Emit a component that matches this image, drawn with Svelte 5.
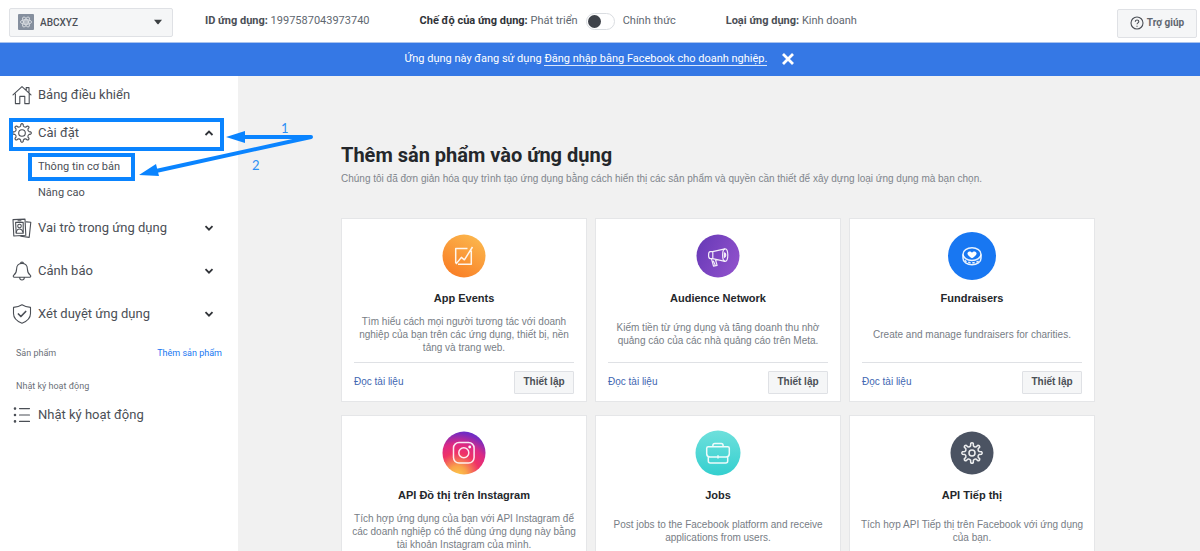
<script>
  const groups = [
    { label: 'Vai trò trong ứng dụng', icon: 'roles' },
    { label: 'Cảnh báo', icon: 'bell' },
    { label: 'Xét duyệt ứng dụng', icon: 'shield' }
  ];

  const products = [
    { icon: 'events', name: 'App Events', text: 'Tìm hiểu cách mọi người tương tác với doanh nghiệp của bạn trên các ứng dụng, thiết bị, nền tảng và trang web.' },
    { icon: 'audience', name: 'Audience Network', text: 'Kiếm tiền từ ứng dụng và tăng doanh thu nhờ quảng cáo của các nhà quảng cáo trên Meta.' },
    { icon: 'fund', name: 'Fundraisers', text: 'Create and manage fundraisers for charities.' },
    { icon: 'instagram', name: 'API Đồ thị trên Instagram', text: 'Tích hợp ứng dụng của bạn với API Instagram để các doanh nghiệp có thể dùng ứng dụng này bằng tài khoản Instagram của mình.' },
    { icon: 'jobs', name: 'Jobs', text: 'Post jobs to the Facebook platform and receive applications from users.' },
    { icon: 'marketing', name: 'API Tiếp thị', text: 'Tích hợp API Tiếp thị trên Facebook với ứng dụng của bạn.' }
  ];

  // Outline of a cog with rounded teeth, centred on (cx, cy).
  function cog(cx, cy, outer, inner, teeth = 8) {
    const step = (Math.PI * 2) / teeth;
    const at = (r, a) => `${(cx + r * Math.cos(a)).toFixed(2)} ${(cy + r * Math.sin(a)).toFixed(2)}`;
    let d = '';
    for (let i = 0; i < teeth; i++) {
      const a = i * step - Math.PI / 2;
      d += `${i ? 'L' : 'M'}${at(inner, a - step * 0.24)}L${at(outer - 0.6, a - step * 0.17)}`;
      d += `Q${at(outer + 0.6, a)} ${at(outer - 0.6, a + step * 0.17)}L${at(inner, a + step * 0.24)}`;
      d += `Q${at(inner - 1.2, a + step * 0.5)} ${at(inner, a + step * 0.76)}`;
    }
    return d + 'Z';
  }

  let live = $state(false);
  let banner = $state(true);
</script>

{#snippet chevron(up)}
  <svg class="chevron" viewBox="0 0 10 8" aria-hidden="true">
    <path d={up ? 'M1.5 6 5 2.5 8.5 6' : 'M1.5 2.2 5 5.7 8.5 2.2'} />
  </svg>
{/snippet}

{#snippet navIcon(name)}
  <svg class="nav-icon" viewBox="0 0 20 20" aria-hidden="true">
    {#if name === 'home'}
      <path d="M1 9.8 10 1.6l9 8.2M3.4 9v9.6h4.4v-7.2h5v7.2h4.4V8.2M14.2 5.2V2.6h2.8v5.2" />
    {:else if name === 'gear'}
      <path d={cog(10, 10, 9.4, 7.2)} />
      <circle cx="10" cy="10" r="3.3" />
    {:else if name === 'roles'}
      <path d="M1 1.6 13 1.1l.8 16.2-12 .7ZM14.4 3.9l4.4.4-1.6 15.1-8.4-1.1" />
      <path d="M3.6 4.4h7.600v10.800H4.200ZM6 2.800h3" />
      <circle cx="7.500" cy="8" r="1.800" />
      <path d="M4.200 14.400c.4-2.200 1.400-3.400 3.300-3.400s3 1.200 3.400 3.200" />
    {:else if name === 'bell'}
      <path d="M10 2.400c3.400 0 5.400 2.300 5.400 5.500 0 3.500 1 4.900 3 6.500.7.7.3 1.800-.7 1.800H2.300c-1 0-1.400-1.100-.7-1.800 2-1.600 3-3 3-6.500 0-3.200 2-5.500 5.400-5.500ZM8.500 2.500c0-2 3-2 3 0M7.600 16.200c.2 3.700 4.600 3.700 4.800 0" />
    {:else if name === 'shield'}
      <path d="M10 .8c2.500 1.700 5.400 2.400 8.500 2.600v6.100c0 4.800-3.500 7.800-8.500 9.800-5-2-8.500-5-8.500-9.800V3.400C4.600 3.200 7.500 2.500 10 .8Z" />
      <path class="strong" d="m6.400 10 2.500 2.500 4.800-5" />
    {:else}
      <path d="M7.500 3.600h10M7.500 10h10M7.500 16.400h10" />
      <path class="dots" d="M3 3.600h.01M3 10h.01M3 16.400h.01" />
    {/if}
  </svg>
{/snippet}

{#snippet productIcon(name)}
  <svg class="product-icon" viewBox="0 0 48 48" aria-hidden="true">
    {#if name === 'events'}
      <defs>
        <linearGradient id="g-events" x1="0.2" y1="1" x2="0.8" y2="0">
          <stop offset="0" stop-color="#f97c24" /><stop offset="1" stop-color="#fbb84e" />
        </linearGradient>
      </defs>
      <circle cx="24" cy="24" r="21.5" fill="url(#g-events)" />
      <path class="line" d="M27.5 16.500H15.700v14.700M18 32.300h13.300V18.500M16 32l5.400-6.600 3 2.400L32.500 15" />
    {:else if name === 'audience'}
      <defs>
        <linearGradient id="g-audience" x1="0" y1="0.3" x2="1" y2="0.8">
          <stop offset="0" stop-color="#6a3bb8" /><stop offset="1" stop-color="#9152cc" />
        </linearGradient>
      </defs>
      <circle cx="24" cy="24" r="21.5" fill="url(#g-audience)" />
      <path class="line thin" d="M18.600 19.700 31 16.900M18.600 26.600 31 29.400M18.800 19.700h-2.600c-2.200 0-2.200 6.900 0 6.900h2.600ZM17.500 26.800l2 7.400 3.600-.8-1.700-6M19.200 28.700l2 4.200" />
      <ellipse class="line thin" cx="31.2" cy="23.1" rx="2.6" ry="6.3" />
      <path class="line thin" d="M30.400 20.800c1.800.6 1.800 4 0 4.600Z" />
    {:else if name === 'fund'}
      <circle cx="24" cy="24" r="24" fill="#1877f2" />
      <ellipse class="line" cx="24" cy="22.2" rx="9" ry="6.4" />
      <path class="line" d="M15 22.600v3.600c0 3.800 4 6.600 9 6.600s9-2.800 9-6.600v-3.600" />
      <path class="line" stroke-dasharray="2.4 1.7" d="M16.600 28.400c3.700 3.200 11.100 3.200 14.800 0" />
      <path fill="#fff" d="M24 26.200c-3-1.800-4.900-3.300-4.500-5.200.5-2 3.400-2.200 4.500-.3 1.100-1.900 4-1.700 4.500.3.4 1.900-1.500 3.400-4.500 5.200Z" />
    {:else if name === 'instagram'}
      <defs>
        <radialGradient id="g-insta" cx="0.35" cy="1.02" r="1.08">
          <stop offset="0" stop-color="#fcc94a" /><stop offset="0.2" stop-color="#f9a24a" />
          <stop offset="0.48" stop-color="#ef3267" /><stop offset="0.68" stop-color="#dd2a84" />
          <stop offset="0.9" stop-color="#7b2bbd" /><stop offset="1" stop-color="#5b2fd0" />
        </radialGradient>
      </defs>
      <circle cx="24" cy="24" r="21.5" fill="url(#g-insta)" />
      <rect class="line" x="13.5" y="13.5" width="20.600" height="20.600" rx="5.5" />
      <circle class="line" cx="23.8" cy="23.8" r="5" />
      <circle cx="29.7" cy="18" r="1.4" fill="#fff" />
    {:else if name === 'jobs'}
      <defs>
        <linearGradient id="g-jobs" x1="0" y1="0" x2="0" y2="1">
          <stop offset="0" stop-color="#6ee0dc" /><stop offset="1" stop-color="#34cfcf" />
        </linearGradient>
      </defs>
      <circle cx="24" cy="24" r="22.5" fill="url(#g-jobs)" />
      <path class="line" d="M14.200 17.800h19.600c1 0 1.500.5 1.500 1.500v5.500c0 2-1.200 3.200-3.200 3.200H15.900c-2 0-3.200-1.200-3.200-3.200v-5.500c0-1 .5-1.500 1.500-1.500ZM18.900 17.600v-1.200c0-1.200.6-1.900 1.900-1.900h6.400c1.300 0 1.900.7 1.900 1.900v1.200M14.300 28v4c0 1.300.7 2 2 2h15.400c1.300 0 2-.7 2-2v-4M24 26.200v3.400" />
    {:else}
      <circle cx="24" cy="24" r="21.5" fill="#4b5362" />
      <path class="line" d={cog(24, 24, 10.3, 7.4)} />
      <circle class="line" cx="24" cy="24" r="3" />
    {/if}
  </svg>
{/snippet}

<div class="app">
  <header class="topbar">
    <div class="app-picker">
      <svg class="app-logo" viewBox="0 0 16 16" aria-hidden="true">
        <rect width="16" height="16" rx="1" fill="#858f9e" />
        <g fill="none" stroke="#e3e6ea" stroke-width="0.8">
          <circle cx="8" cy="8" r="1.3" />
          <ellipse cx="8" cy="8" rx="5.6" ry="2.3" />
          <ellipse cx="8" cy="8" rx="5.6" ry="2.3" transform="rotate(60 8 8)" />
          <ellipse cx="8" cy="8" rx="5.6" ry="2.3" transform="rotate(120 8 8)" />
        </g>
      </svg>
      <select aria-label="Ứng dụng"><option>ABCXYZ</option></select>
      <svg class="caret" viewBox="0 0 8 6" aria-hidden="true"><path d="M0 .8h8L4.600 5q-.6.6-1.200 0Z" fill="#3c4043" /></svg>
    </div>
    <p class="app-id"><b>ID ứng dụng:</b> 1997587043973740</p>
    <div class="mode">
      <span><b>Chế độ của ứng dụng:</b> Phát triển</span>
      <input id="mode" type="checkbox" role="switch" bind:checked={live} />
      <label for="mode">Chính thức</label>
    </div>
    <p class="kind"><b>Loại ứng dụng:</b> Kinh doanh</p>
    <button class="help" type="button">
      <svg viewBox="0 0 14 14" aria-hidden="true">
        <circle cx="7" cy="7" r="6" />
        <path d="M5.300 5.700c0-2.300 3.500-2.200 3.500-.1C8.800 6.900 7 6.900 7 8.300M7 9.700v1" />
      </svg>
      Trợ giúp
    </button>
  </header>

  {#if banner}
    <div class="banner">
      <p>Ứng dụng này đang sử dụng <a href="#login">Đăng nhập bằng Facebook cho doanh nghiệp.</a></p>
      <button type="button" aria-label="Đóng" onclick={() => (banner = false)}>
        <svg viewBox="0 0 14 14" aria-hidden="true"><path d="m2 2 10 10M12 2 2 12" /></svg>
      </button>
    </div>
  {/if}

  <div class="body">
    <nav class="sidebar">
      <a class="row" href="#dashboard">{@render navIcon('home')}<span>Bảng điều khiển</span></a>
      <button class="row" type="button" aria-expanded="true">
        {@render navIcon('gear')}<span>Cài đặt</span>{@render chevron(true)}
      </button>
      <div class="sub">
        <a href="#basic">Thông tin cơ bản</a>
        <a href="#advanced">Nâng cao</a>
      </div>
      {#each groups as group}
        <button class="row tall" type="button" aria-expanded="false">
          {@render navIcon(group.icon)}<span>{group.label}</span>{@render chevron(false)}
        </button>
      {/each}
      <div class="section">
        <div><span>Sản phẩm</span><a href="#add">Thêm sản phẩm</a></div>
        <div><span>Nhật ký hoạt động</span></div>
      </div>
      <a class="row short" href="#log">{@render navIcon('list')}<span>Nhật ký hoạt động</span></a>
    </nav>

    <main>
      <div class="content">
        <h1>Thêm sản phẩm vào ứng dụng</h1>
        <p class="lead">Chúng tôi đã đơn giản hóa quy trình tạo ứng dụng bằng cách hiển thị các sản phẩm và quyền cần thiết để xây dựng loại ứng dụng mà bạn chọn.</p>
        <div class="grid">
          {#each products as product}
            <article>
              {@render productIcon(product.icon)}
              <h2>{product.name}</h2>
              <div class="text"><p>{product.text}</p></div>
              <footer>
                <a href="#docs">Đọc tài liệu</a>
                <button type="button">Thiết lập</button>
              </footer>
            </article>
          {/each}
        </div>
      </div>
    </main>

    <svg class="marks" width="320" height="120" viewBox="0 0 320 120" aria-hidden="true">
      <rect x="11" y="44" width="211" height="29" />
      <rect x="30" y="79" width="103" height="24" />
      <path class="shaft" d="M242 61h69L156 95" />
      <path class="head" d="M226 61l19-6v12ZM139 99l17-11 3 12Z" />
      <text x="281" y="57">1</text>
      <text x="252" y="94">2</text>
    </svg>
  </div>
</div>

<style>
  :global(body) { margin: 0; }
  .app {
    height: 100vh;
    display: flex;
    flex-direction: column;
    overflow: hidden;
    font: 11px/16px Roboto, "Liberation Sans", sans-serif;
    color: #4b4f56;
    background: #f1f1f1;
  }
  p, h1, h2 { margin: 0; }
  a { color: inherit; text-decoration: none; }
  button { font: inherit; color: inherit; cursor: pointer; }
  b { font-weight: 700; }

  .topbar {
    display: flex;
    align-items: center;
    box-sizing: border-box;
    height: 43px;
    flex: none;
    padding: 0 3px 0 9px;
    border-bottom: 1px solid #a9c3ee;
    background: #fff;
    white-space: nowrap;
    color: #606770;
  }
  .topbar b { color: #4b4f56; }
  .app-picker {
    position: relative;
    display: flex;
    align-items: center;
    width: 164px;
    height: 29px;
    margin: 2px 32px 0 0;
  }
  .app-picker select {
    appearance: none;
    width: 100%;
    height: 100%;
    padding: 0 24px 0 30px;
    border: 1px solid #dfe1e5;
    border-radius: 2px;
    background: #f5f6f7;
    font: 500 10px Roboto, sans-serif;
    color: #4b4f56;
  }
  .app-logo { position: absolute; left: 9px; width: 16px; height: 16px; }
  .caret { position: absolute; right: 11px; width: 8px; height: 6px; }
  .app-id { margin-right: 50px; }
  .mode { display: flex; align-items: center; gap: 8px; margin-right: 50px; }
  .mode b { color: #303338; }
  .mode input {
    appearance: none;
    width: 29px;
    height: 17px;
    margin: 0;
    padding: 1px;
    box-sizing: border-box;
    border: 1px solid #dadde1;
    border-radius: 9px;
    background: #fff;
  }
  .mode input::before {
    content: "";
    display: block;
    width: 13px;
    height: 13px;
    border-radius: 50%;
    background: #3e4249;
  }
  .mode input:checked::before { margin-left: auto; }
  .help {
    display: flex;
    align-items: center;
    justify-content: center;
    gap: 3px;
    width: 80px;
    height: 29px;
    margin: 4px 0 0 auto;
    padding: 0;
    border: 1px solid #dfe1e5;
    border-radius: 2px;
    background: #f5f6f7;
    font-size: 10px;
    font-weight: 700;
  }
  .help svg { width: 14px; height: 14px; fill: none; stroke: #4b4f56; stroke-width: 1.1; }

  .banner {
    display: flex;
    align-items: center;
    justify-content: center;
    gap: 14px;
    box-sizing: border-box;
    height: 33px;
    padding-bottom: 2px;
    flex: none;
    background: #3578e5;
    color: #fff;
  }
  .banner a { border-bottom: 1px solid #dbe7fb; }
  .banner button { display: flex; padding: 0; border: 0; background: none; }
  .banner svg { width: 14px; height: 14px; fill: none; stroke: #fff; stroke-width: 2.8; }

  .body { position: relative; display: flex; flex: 1; min-height: 0; }
  .sidebar {
    width: 238px;
    flex: none;
    background: #fff;
    font-size: 13px;
  }
  .row {
    display: flex;
    align-items: center;
    gap: 6px;
    box-sizing: border-box;
    width: 100%;
    height: 38px;
    padding: 0 24px 0 12px;
    border: 0;
    background: none;
    text-align: left;
  }
  .row span { flex: 1; }
  .tall { height: 43px; }
  .short { height: 24px; }
  .nav-icon {
    width: 20px;
    height: 20px;
    overflow: visible;
    fill: none;
    stroke: #4b4f56;
    stroke-width: 1.1;
    stroke-linejoin: round;
    stroke-linecap: round;
  }
  .nav-icon .strong { stroke-width: 1.7; }
  .nav-icon .dots { stroke-width: 2.6; }
  .chevron { width: 10px; height: 8px; fill: none; stroke: #303338; stroke-width: 1.8; }
  .sub { padding: 2px 0 0 38px; font-size: 11px; }
  .sub a { display: block; line-height: 26px; }
  .section { padding: 2px 16px 0; font-size: 9px; line-height: 33px; color: #6b7078; }
  .section div { display: flex; justify-content: space-between; }
  .section a { color: #1877f2; }

  main {
    flex: 1;
    overflow: auto;
    scrollbar-width: none;
    padding-right: 2px;
    font-family: "Liberation Sans", Arial, sans-serif;
  }
  .content { max-width: 754px; margin: 0 auto; padding: 67px 0 24px; }
  h1 { font: 700 20px/24px Roboto, sans-serif; color: #24272b; }
  .lead { margin: 4px 0 31px; font-size: 10px; color: #7f858c; }
  .grid { display: grid; grid-template-columns: repeat(3, 1fr); gap: 13px 8px; }
  article {
    display: flex;
    flex-direction: column;
    padding: 13px 12px 0;
    border: 1px solid #e5e6e8;
    background: #fff;
    text-align: center;
  }
  .product-icon { width: 48px; height: 48px; margin: 0 auto 10px; }
  .product-icon .line {
    fill: none;
    stroke: #fff;
    stroke-width: 1.5;
    stroke-opacity: 0.9;
    stroke-linejoin: round;
  }
  .product-icon .thin { stroke-width: 1.2; }
  h2 { font-size: 11px; line-height: 16px; font-weight: 700; color: #24272b; }
  .text {
    display: flex;
    align-items: center;
    justify-content: center;
    min-height: 48px;
    margin: 4px -4px;
    font-size: 10px;
    line-height: 13px;
    color: #777d85;
  }
  footer {
    display: flex;
    align-items: center;
    justify-content: space-between;
    height: 38px;
    border-top: 1px solid #dfe1e5;
    font-size: 10px;
  }
  footer a { color: #4267b2; }
  footer button {
    width: 60px;
    height: 23px;
    padding: 0;
    border: 1px solid #dfe1e5;
    border-radius: 1px;
    background: #f5f6f7;
    font-weight: 700;
  }

  /* Callouts drawn over the menu */
  .marks { position: absolute; left: 0; top: 0; pointer-events: none; }
  .marks rect { fill: none; stroke: #0a84ff; stroke-width: 4; }
  .marks .shaft { fill: none; stroke: #0a84ff; stroke-width: 4; stroke-linejoin: round; }
  .marks .head { fill: #0a84ff; }
  .marks text { font: 13px Lato, sans-serif; fill: #2b90f5; }
</style>
